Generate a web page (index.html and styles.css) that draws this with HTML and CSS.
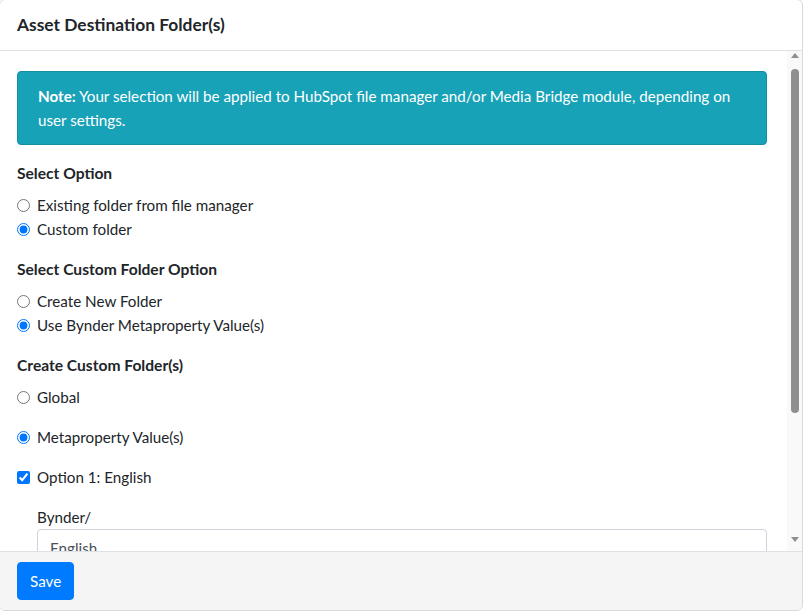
FILE: index.html
```html
<!DOCTYPE html>
<html lang="en">
<head>
  <meta charset="UTF-8">
  <meta name="viewport" content="width=device-width, initial-scale=1.0">
  <title>Asset Destination Folder(s)</title>
  <link rel="stylesheet" href="styles.css">
</head>
<body>
  <div class="modal">
    <div class="modal-header">
      <h5 class="modal-title">Asset Destination Folder(s)</h5>
    </div>

    <div class="modal-body">
      <div class="body-content">
        <div class="alert-info">
          <strong>Note:</strong> Your selection will be applied to HubSpot file manager and/or Media Bridge module, depending on user settings.
        </div>

        <div class="group">
          <label class="group-label">Select Option</label>
          <label class="check"><input type="radio" name="opt"> Existing folder from file manager</label>
          <label class="check"><input type="radio" name="opt" checked> Custom folder</label>
        </div>

        <div class="group">
          <label class="group-label">Select Custom Folder Option</label>
          <label class="check"><input type="radio" name="custom"> Create New Folder</label>
          <label class="check"><input type="radio" name="custom" checked> Use Bynder Metaproperty Value(s)</label>
        </div>

        <div class="group">
          <label class="group-label">Create Custom Folder(s)</label>
          <div class="stack">
            <label class="check"><input type="radio" name="scope"> Global</label>
            <label class="check"><input type="radio" name="scope" checked> Metaproperty Value(s)</label>
            <label class="check"><input type="checkbox" checked> Option 1: English</label>
            <div class="sub">
              <label class="sub-label">Bynder/</label>
              <input class="form-control" type="text" value="English">
            </div>
          </div>
        </div>
      </div>

      <!-- scrollbar of the body -->
      <div class="scrollbar">
        <div class="arrow-up"></div>
        <div class="track"><div class="thumb"></div></div>
        <div class="arrow-down"></div>
      </div>
    </div>

    <div class="modal-footer">
      <button class="btn-primary">Save</button>
    </div>
  </div>
</body>
</html>
```

FILE: styles.css
```css
* {
  box-sizing: border-box;
}

body {
  margin: 0;
  font-family: 'Lato', 'Liberation Sans', sans-serif;
  font-size: 15.2px;
  line-height: 24px;
  color: #212529;
  background: #fff;
  overflow: hidden;
}

.modal {
  width: 804px;
  height: 612px;
  margin: -1px 0 0 -1px;
  border: 1px solid #d9d9d9;
  border-radius: 6px;
  display: flex;
  flex-direction: column;
  background: #fff;
  overflow: hidden;
}

.modal-header {
  height: 51px;
  flex: none;
  display: flex;
  align-items: center;
  padding: 0 17px;
  border-bottom: 1px solid #dee2e6;
}

.modal-title {
  margin: 0;
  font-size: 17.4px;
  font-weight: 700;
  line-height: 24px;
}

.modal-body {
  flex: 1;
  min-height: 0;
  display: flex;
}

.body-content {
  flex: 1;
  overflow: hidden;
  padding: 20px 20px 0 17px;
}

.alert-info {
  background: #17a2b8;
  border: 1px solid #148ea1;
  border-radius: 4px;
  color: #fff;
  padding: 12px 20px;
  margin-bottom: 16px;
}

.group {
  display: flex;
  flex-direction: column;
  margin-bottom: 16px;
}

.group-label {
  font-size: 15.6px;
  font-weight: 700;
  margin-bottom: 8px;
}

.check {
  display: flex;
  align-items: center;
  gap: 7px;
}

.check input {
  margin: 0;
  width: 13px;
  height: 13px;
}

.stack {
  display: flex;
  flex-direction: column;
  gap: 16px;
}

.sub {
  display: flex;
  flex-direction: column;
  padding-left: 20px;
}

.form-control {
  height: 38px;
  border: 1px solid #ced4da;
  border-radius: 4px;
  padding: 6px 12px;
  font: inherit;
  color: #495057;
}

/* Scrollbar */
.scrollbar {
  width: 15px;
  flex: none;
  display: flex;
  flex-direction: column;
  align-items: center;
  background: #f9f9f9;
}

.arrow-up,
.arrow-down {
  height: 15px;
  flex: none;
  width: 0;
  border-left: 4px solid transparent;
  border-right: 4px solid transparent;
}

.arrow-up {
  margin-top: 2px;
  height: 0;
  border-bottom: 5px solid #8f8f8f;
  margin-bottom: 11px;
}

.arrow-down {
  height: 0;
  border-top: 5px solid #8f8f8f;
  margin-top: 2px;
  margin-bottom: 9px;
}

.track {
  flex: 1;
  width: 100%;
  display: flex;
  justify-content: center;
}

.thumb {
  width: 8px;
  height: 344px;
  border-radius: 4px;
  background: #8f8f8f;
}

.modal-footer {
  flex: none;
  height: 59px;
  background: #f5f5f5;
  border-top: 1px solid #dee2e6;
  padding: 10px 17px 9px;
}

.btn-primary {
  height: 38px;
  padding: 0 12px;
  border: 1px solid #007bff;
  border-radius: 4px;
  background: #007bff;
  color: #fff;
  font: inherit;
}
```
